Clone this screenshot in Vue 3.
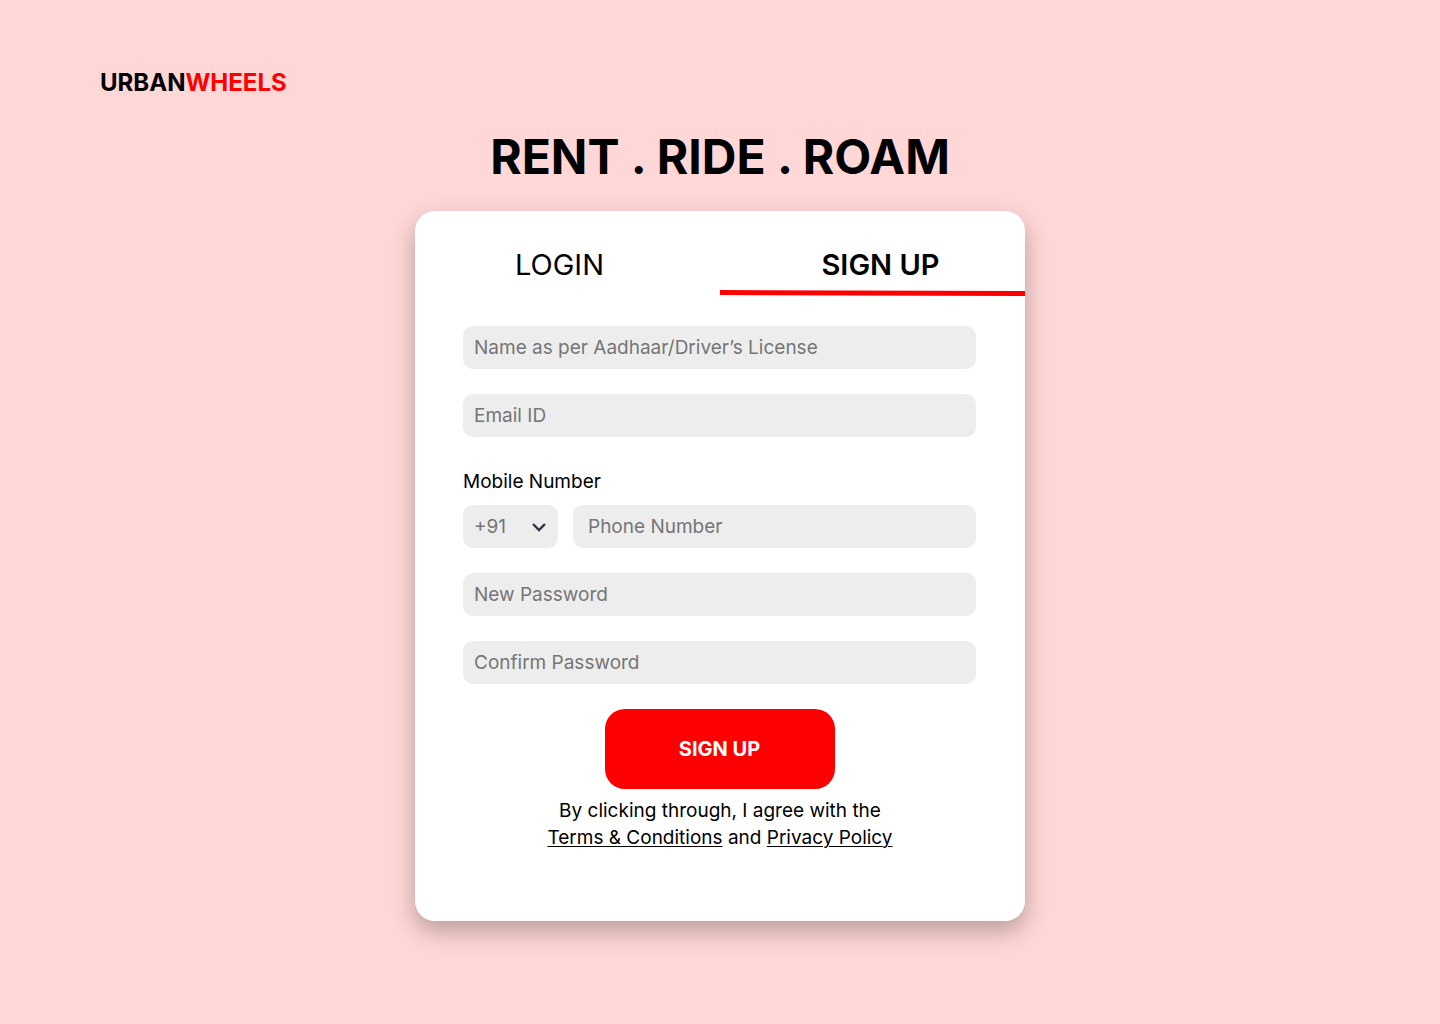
<script setup>
import { ref } from 'vue'

const name = ref('')
const email = ref('')
const code = ref('+91')
const phone = ref('')
const password = ref('')
const confirmation = ref('')
</script>

<template>
  <div class="page">
    <header class="brand">URBAN<span class="brand-accent">WHEELS</span></header>

    <main class="content">
      <h1 class="headline">RENT . RIDE . ROAM</h1>

      <section class="card">
        <nav class="tabs">
          <button type="button" class="tab tab-login">LOGIN</button>
          <button type="button" class="tab tab-signup">
            SIGN UP
            <svg class="tab-line" viewBox="0 0 305 6" preserveAspectRatio="none" aria-hidden="true">
              <path d="M0 0 L305 1 V6 L0 5 Z" fill="#ff0000" />
            </svg>
          </button>
        </nav>

        <form class="form" @submit.prevent>
          <input v-model="name" class="field" type="text" aria-label="Name" placeholder="Name as per Aadhaar/Driver’s License" />
          <input v-model="email" class="field" type="email" aria-label="Email ID" placeholder="Email ID" />

          <div class="mobile">
            <label class="mobile-label" for="phone">Mobile Number</label>
            <div class="mobile-row">
              <div class="code">
                <select v-model="code" class="field code-select" aria-label="Country code">
                  <option>+91</option>
                </select>
                <svg class="chevron" viewBox="0 0 16 10" aria-hidden="true">
                  <path d="M2 2 L8 8 L14 2" fill="none" stroke="#33333f" stroke-width="2.4" />
                </svg>
              </div>
              <input id="phone" v-model="phone" class="field phone" type="tel" placeholder="Phone Number" />
            </div>
          </div>

          <input v-model="password" class="field" type="password" aria-label="New Password" placeholder="New Password" />
          <input v-model="confirmation" class="field" type="password" aria-label="Confirm Password" placeholder="Confirm Password" />

          <button type="submit" class="submit">SIGN UP</button>
        </form>

        <p class="terms">
          By clicking through, I agree with the<br />
          <a href="#terms">Terms &amp; Conditions</a> and <a href="#privacy">Privacy Policy</a>
        </p>
      </section>
    </main>
  </div>
</template>

<style>
body {
  background: #ffd7d7;
}
</style>

<style scoped>
.page,
.page * {
  box-sizing: border-box;
}

.page {
  min-height: 100vh;
  padding: 65px 0 48px;
  background: #ffd7d7;
  color: #000;
  font-family: Inter, "Noto Sans", sans-serif;
  font-size: 19px;
  line-height: 27px;
}

.brand {
  padding-left: 100px;
  font-size: 24px;
  font-weight: 700;
  line-height: 36px;
}

.brand-accent {
  color: #ff0000;
}

.content {
  display: flex;
  flex-direction: column;
  align-items: center;
}

.headline {
  margin: 19px 0 18px;
  font-size: 48px;
  font-weight: 700;
  line-height: 73px;
}

.card {
  width: 100%;
  max-width: 610px;
  padding: 32px 0 70px;
  border-radius: 20px;
  background: #fff;
  box-shadow: 0 10px 24px rgba(0, 0, 0, 0.28);
}

.tabs {
  display: flex;
}

.tab {
  position: relative;
  flex: 1;
  height: 53px;
  padding: 0 0 9px;
  border: 0;
  background: none;
  color: #000;
  font-family: inherit;
  font-size: 29px;
  font-weight: 400;
  line-height: 44px;
}

.tab-login {
  padding-right: 16px;
}

.tab-signup {
  padding-left: 16px;
  font-weight: 600;
}

.tab-line {
  position: absolute;
  left: 0;
  bottom: 0;
  width: 100%;
  height: 6px;
}

.form {
  display: flex;
  flex-direction: column;
  gap: 25px;
  padding: 30px 49px 0 48px;
}

.field {
  width: 100%;
  height: 43px;
  padding: 0 11px;
  border: 0;
  border-radius: 10px;
  background: #ededed;
  color: #757575;
  font-family: inherit;
  font-size: 19px;
}

.field::placeholder {
  color: #757575;
  opacity: 1;
}

.mobile {
  padding-top: 6px;
}

.mobile-label {
  display: block;
  margin-bottom: 10px;
}

.mobile-row {
  display: flex;
  gap: 15px;
}

.code {
  position: relative;
  flex: 0 0 95px;
}

.code-select {
  display: block;
  appearance: none;
}

.chevron {
  position: absolute;
  top: 17px;
  right: 11px;
  width: 16px;
  height: 10px;
  pointer-events: none;
}

.phone {
  flex: 1;
  min-width: 0;
  padding: 0 15px;
}

.submit {
  align-self: center;
  width: 230px;
  height: 80px;
  padding: 0;
  border: 0;
  border-radius: 20px;
  background: #ff0000;
  color: #fff;
  font-family: inherit;
  font-size: 20px;
  font-weight: 700;
}

.terms {
  margin: 8px 0 0;
  text-align: center;
}

.terms a {
  color: inherit;
  text-decoration: underline;
  text-decoration-thickness: 1px;
  text-underline-offset: 2px;
}
</style>
